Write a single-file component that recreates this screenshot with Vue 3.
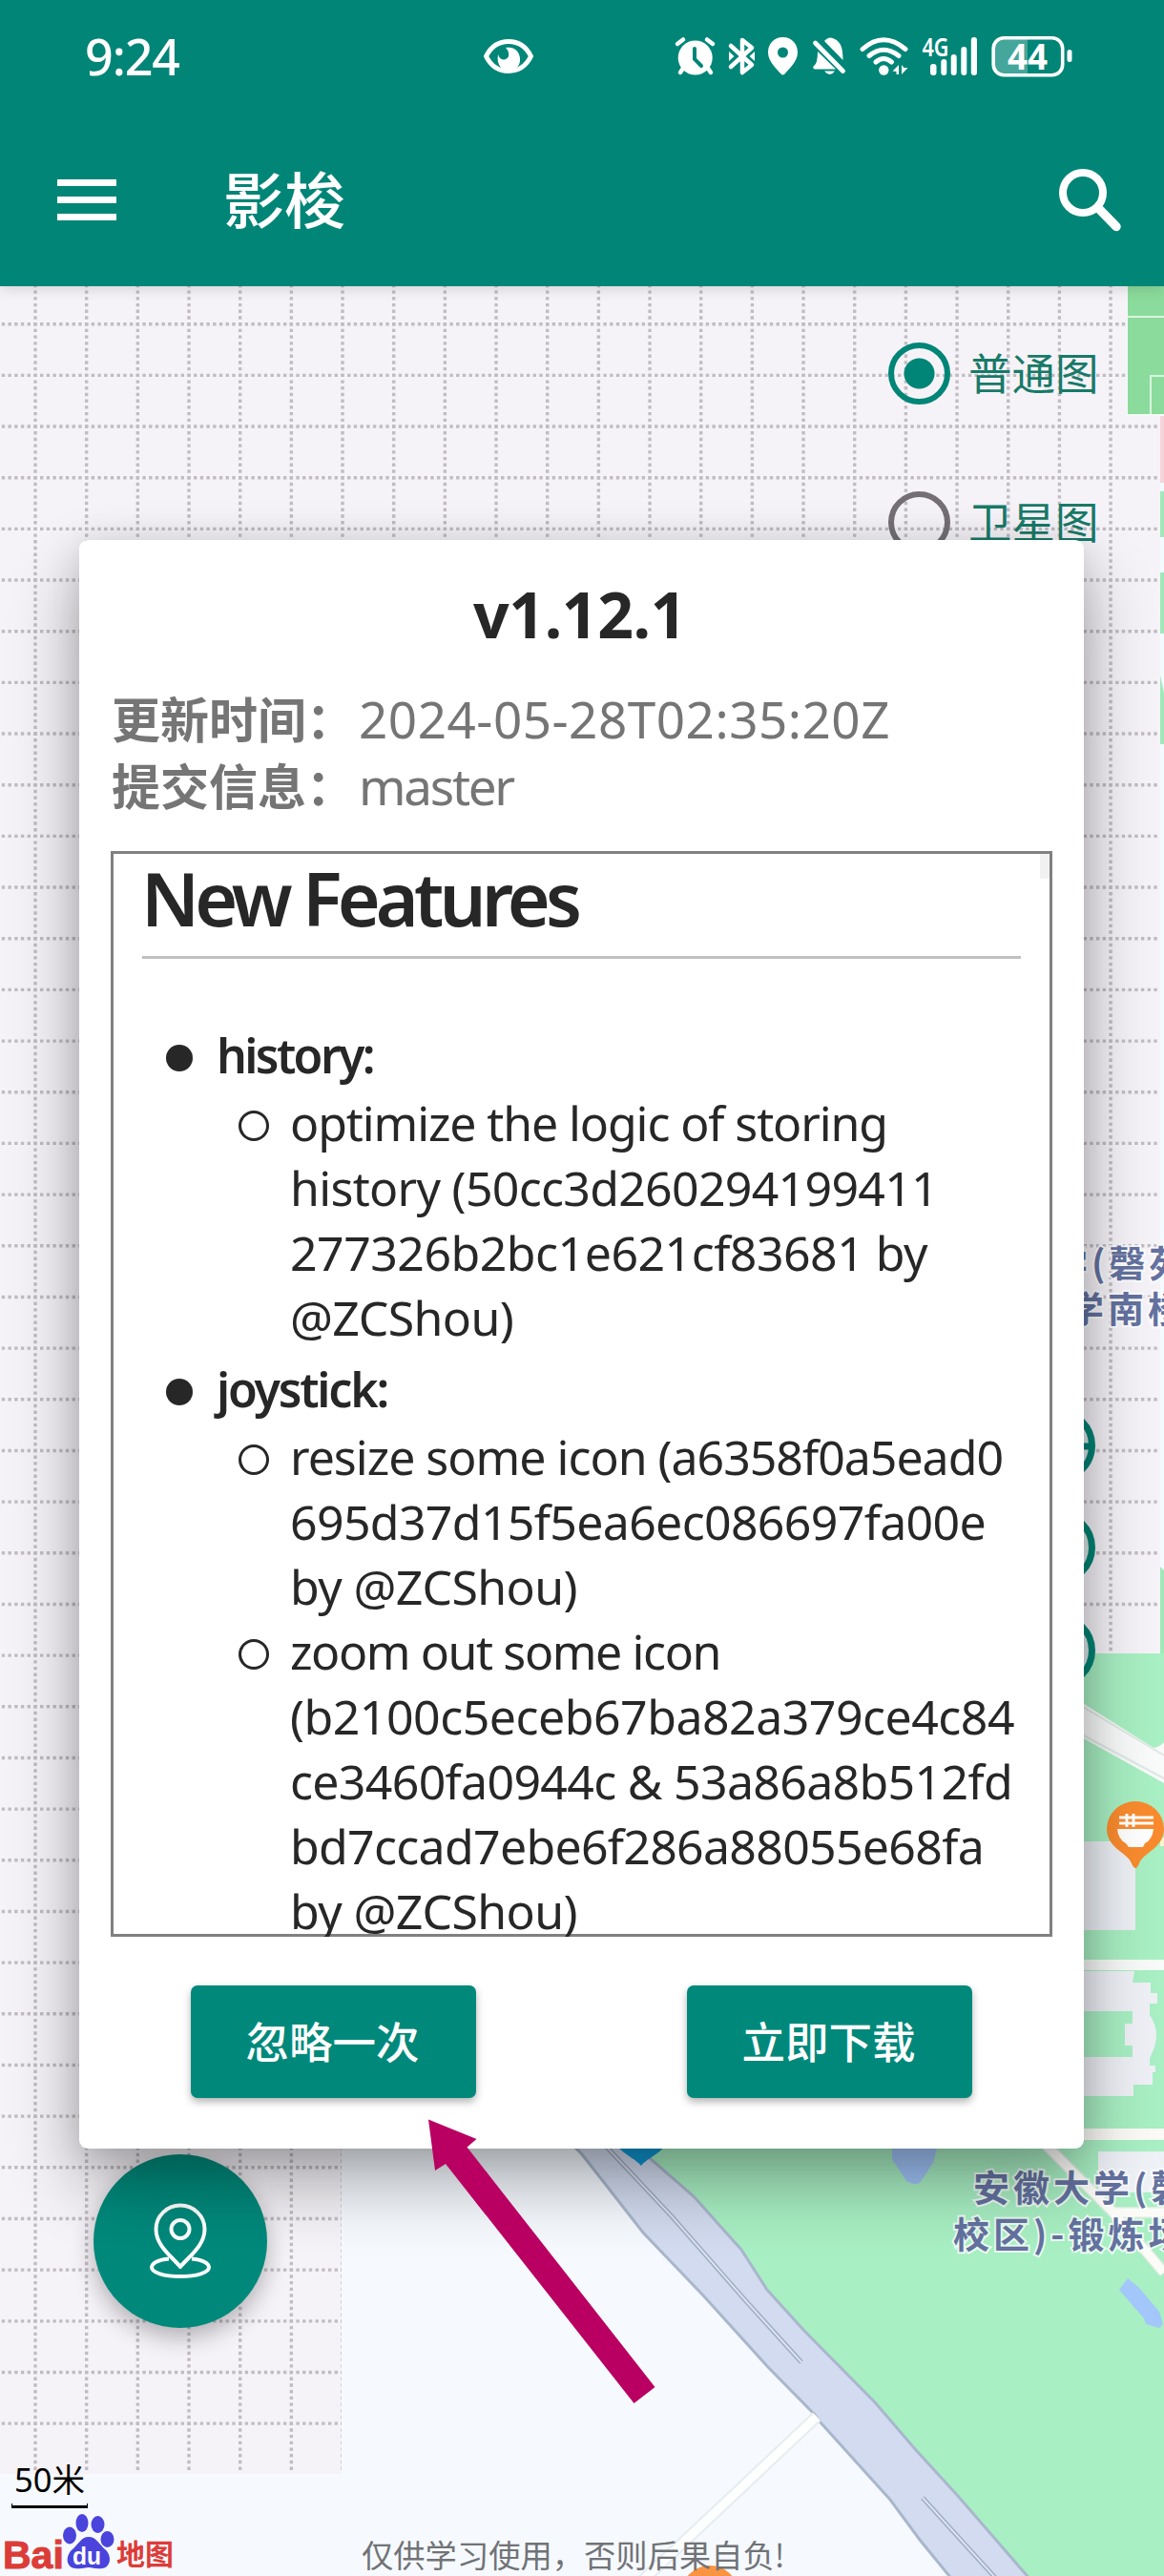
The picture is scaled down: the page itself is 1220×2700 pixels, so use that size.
<script setup>
const cell = 53.67
const columns = Array.from({ length: 22 }, (_, i) => 37 + i * cell)
const rows = Array.from({ length: 42 }, (_, i) => 339.7 + i * cell)

const groups = [
  {
    name: 'history:',
    width: 164,
    items: [
      [
        { text: 'optimize the logic of storing', width: 626 },
        { text: 'history (50cc3d260294199411', width: 679 },
        { text: '277326b2bc1e621cf83681 by', width: 668 },
        { text: '@ZCShou)', width: 234 },
      ],
    ],
  },
  {
    name: 'joystick:',
    width: 179,
    items: [
      [
        { text: 'resize some icon (a6358f0a5ead0', width: 747 },
        { text: '695d37d15f5ea6ec086697fa00e', width: 729 },
        { text: 'by @ZCShou)', width: 301 },
      ],
      [
        { text: 'zoom out some icon', width: 451 },
        { text: '(b2100c5eceb67ba82a379ce4c84', width: 759 },
        { text: 'ce3460fa0944c & 53a86a8b512fd', width: 757 },
        { text: 'bd7ccad7ebe6f286a88055e68fa', width: 727 },
        { text: 'by @ZCShou)', width: 301 },
      ],
    ],
  },
]

// Tracks a line of text out to the given width.
const vFit = {
  mounted(el, { value }) {
    const gap = (value - el.getBoundingClientRect().width) / el.textContent.length
    el.style.letterSpacing = gap.toFixed(3) + 'px'
  },
}
</script>

<template>
  <div class="screen">
    <svg class="map" width="1220" height="2700" viewBox="0 0 1220 2700">
      <rect width="1220" height="2700" fill="#f6f3f8" />
      <g stroke="#c0bcc1" stroke-width="3.4" stroke-dasharray="3.4 3.309" stroke-dashoffset="1.7">
        <line v-for="x in columns" :key="'c' + x" :x1="x" :x2="x" y1="286.03" y2="2591" />
        <line v-for="y in rows" :key="'r' + y" x1="-16.67" x2="1214" :y1="y" :y2="y" />
      </g>

      <rect x="358" y="2200" width="862" height="500" fill="#f6faff" />
      <rect x="0" y="2593" width="400" height="107" fill="#f6faff" />

      <rect x="1181" y="290" width="39" height="146" fill="#f3faf5" />
      <rect x="1182" y="290" width="38" height="144" fill="#8bdb9c" />
      <path d="M1182 332H1220M1206 434V394H1220" fill="none" stroke="#d9f5df" stroke-width="2" />

      <rect x="1216" y="434" width="4" height="1300" fill="#f3fbff" />
      <rect x="1216" y="436" width="4" height="70" fill="#f5d5d9" />
      <rect x="1216" y="515" width="4" height="48" fill="#9fe9b9" />
      <rect x="1216" y="600" width="4" height="64" fill="#9fe9b9" />
      <path d="M1216 708l4 18v54h-4z" fill="#9fe9b9" />
      <path d="M1216 1642l4 4v90h-4z" fill="#9fe9b9" />

      <rect x="1100" y="1733" width="120" height="560" fill="#a8efc3" />
      <path d="M650 2230L682 2263L727 2302L777 2358L804 2400L843 2443L917 2518L960 2568L1003 2615L1077 2700H1220V2230Z" fill="#a8efc3" />

      <path d="M1130 1782L1209 1832Q1216 1831 1220 1826V1869L1130 1819Z" fill="#f9fbfa" />
      <path d="M1130 1786L1220 1840M1130 1816L1220 1864" stroke="#dfe8e4" stroke-width="2" />
      <rect x="1130" y="1930" width="60" height="93" fill="#eceff4" />
      <rect x="1216" y="1926" width="4" height="9" fill="#fdf3cf" />
      <rect x="1130" y="2054" width="90" height="11" fill="#f8faf8" />
      <path d="M1130 2066H1189L1187 2078H1206V2089H1213V2100H1205V2112Q1219 2132 1205 2157V2165H1211V2172H1208V2185H1188V2197H1130V2156H1187V2144H1179V2121H1187V2108H1130Z" fill="#eef0f6" />
      <rect x="1130" y="2231" width="90" height="12" fill="#fbfaf6" />
      <rect x="1151" y="2255" width="69" height="43" fill="#eef1f6" />
      <path d="M1088 2240L1166 2318L1220 2382M1166 2319H1220" fill="none" stroke="#dfeae0" stroke-width="12" />
      <path d="M1088 2240L1166 2318L1220 2382M1166 2319H1220" fill="none" stroke="#fbfbf8" stroke-width="9" />

      <path d="M935 2240V2263L950 2286Q957 2291 964 2288L978 2267L985 2240Z" fill="#a3c6fb" />
      <path d="M1182 2388L1173 2400L1199 2430L1201 2436L1215 2440L1219 2436L1215 2423L1194 2398Z" fill="#a3c6fb" />

      <path d="M598 2246L610 2258L674 2340L738 2407L804 2480L853 2530L859 2538L933 2620L964 2662L999 2705H1081L1003 2615L960 2568L917 2518L843 2443L804 2400L777 2358L727 2302L682 2263L660 2240Z" fill="#d2dbef" stroke="#a9b7cc" stroke-width="3" />
      <path d="M628 2242L704 2323L782 2412L840 2476M967 2618L1046 2705" fill="none" stroke="#a5b2c8" stroke-width="5" />
      <path d="M628 2242L704 2323L782 2412L840 2476M967 2618L1046 2705" fill="none" stroke="#e6ecf8" stroke-width="1.5" />
      <path d="M856 2533L768 2616L672 2706" stroke="#e6ecf0" stroke-width="13" fill="none" />
      <path d="M856 2533L768 2616L672 2706" stroke="#fdfefe" stroke-width="9" fill="none" />

      <path d="M642 2232a30 30 0 0 1 60 0C702 2256 682 2258 672 2270C662 2258 642 2256 642 2232Z" fill="#0f97d3" />
      <circle cx="744" cy="2719" r="30" fill="#fb9440" />

      <path d="M1160 1917a30 29 0 0 1 60 0C1220 1937 1198 1942 1194 1953Q1190 1963 1186 1953C1182 1942 1160 1937 1160 1917Z" fill="#f98b2e" />
      <path d="M1171 1917H1209Q1208 1928 1200 1932L1198 1936H1183L1180 1932Q1172 1928 1171 1917Z" fill="#fff" />
      <path d="M1173 1905H1209M1173 1911H1209M1181 1901V1915M1188 1901V1915" stroke="#fff" stroke-width="3" />

      <g class="place">
        <text x="1102" y="1338">学(磬苑</text>
        <text x="1119" y="1386">学南楼</text>
        <text x="1020" y="2307">安徽大学(磬苑</text>
        <text x="999" y="2356">校区)-锻炼场</text>
      </g>

      <g fill="#dbe9e8" stroke="#008577" stroke-width="7">
        <circle cx="1109" cy="1515" r="35.5" />
        <circle cx="1109" cy="1622" r="35.5" />
        <circle cx="1109" cy="1730" r="35.5" />
        <path d="M1109 1516H1146" />
      </g>
    </svg>

    <header class="top">
      <div class="status">
        <span v-fit="99" class="clock">9:24</span>
        <svg class="status-icons" width="640" height="60" viewBox="490 30 640 60" fill="#fff" stroke="none">
          <path d="M509.500 59C515 48 524 43.500 533 43.500S551 48 556.500 59C551 70 542 74.500 533 74.500S515 70 509.500 59Z" fill="none" stroke="#fff" stroke-width="5" stroke-linejoin="round" />
          <path d="M530 50C541 48 546 57 545 64C544 71 539 74 533 74C526 74 520 68 522 57C524 64 531 64 533 59C534 55 532 52 530 50Z" />

          <circle cx="728.700" cy="60.500" r="18" />
          <path d="M710 46L716 41.500M747 46L741 41.500M717 70L713 76M741 70L745 76" stroke="#fff" stroke-width="4.500" stroke-linecap="round" />
          <path d="M728 51V62L735 69" fill="none" stroke="#008577" stroke-width="4" stroke-linecap="round" />

          <path d="M766 48L788 68L778 76V42L788 50L766 70" fill="none" stroke="#fff" stroke-width="4.500" stroke-linejoin="round" stroke-linecap="round" />
          <path d="M764 54L769.500 59L764 64ZM791 54L785.500 59L791 64Z" />

          <path d="M820.500 39C830 39 836 46 836 55C836 65 826 73 822.500 77.500Q820.500 79.500 818.500 77.500C815 73 805 65 805 55C805 46 811 39 820.500 39ZM820.500 49.500a5.500 5.500 0 1 0 0 11a5.500 5.500 0 1 0 0-11Z" fill-rule="evenodd" />

          <path d="M864 43Q869 37 875 41C881 44 883.500 50 883.500 63Z" />
          <path d="M857 54L876 72.500H854Q850.500 71 853.500 68.500Q857 66 857 54ZM864 74.500H875Q870 81.500 864 74.500Z" />
          <path d="M854.500 45L883.500 74.500" stroke="#fff" stroke-width="4.800" stroke-linecap="round" />

          <g fill="none" stroke="#fff" stroke-width="5" stroke-linecap="round">
            <path d="M904 51.500Q926 32 949 51.500M911 58.500Q926 46 942 58.500M918 65Q926 58 934.500 65" />
          </g>
          <circle cx="926.300" cy="73.500" r="5.200" />
          <path d="M942 68V78H939.500V75L935.500 74.500ZM945 78V68L947.500 71L951.500 71Z" />

          <g class="net"><text x="966.500" y="59" textLength="28" lengthAdjust="spacingAndGlyphs">4G</text></g>
          <rect x="975" y="67" width="6.500" height="12" rx="3" />
          <rect x="986.300" y="62" width="6" height="17" rx="3" />
          <rect x="996.700" y="57" width="6" height="22" rx="3" />
          <rect x="1007.300" y="49" width="6" height="30" rx="3" />
          <rect x="1017.800" y="39" width="6.200" height="40" rx="3" />

          <path d="M1077 40H1052Q1041 40 1041 51V67Q1041 78 1052 78H1077Z" opacity=".27" />
          <rect x="1041.200" y="39.700" width="72.500" height="39" rx="11" fill="none" stroke="#fff" stroke-width="3.600" />
          <rect x="1118.500" y="52" width="5" height="13" rx="2.500" />
          <text class="level" x="1056" y="73" textLength="42" lengthAdjust="spacingAndGlyphs">44</text>
        </svg>
      </div>
      <div class="bar">
        <div class="menu"><i></i><i></i><i></i></div>
        <h1>影梭</h1>
        <svg class="search" width="66" height="68" viewBox="0 0 66 68" fill="none" stroke="#fff" stroke-width="8">
          <circle cx="25" cy="25" r="21" />
          <path d="M41 41L60 60.500" stroke-width="9.500" stroke-linecap="round" />
        </svg>
      </div>
    </header>

    <div class="layers">
      <label><span class="radio on"></span><span class="name">普通图</span></label>
      <label><span class="radio"></span><span class="name">卫星图</span></label>
    </div>

    <div class="fab">
      <svg width="70" height="84" viewBox="154 2307 70 84" fill="none" stroke="#fff" stroke-width="4">
        <path d="M189 2376C180 2365 163.500 2354 163.500 2336.500a25.500 25 0 0 1 51 0C214.500 2354 198 2365 189 2376Z" stroke-linejoin="round" />
        <circle cx="189" cy="2336.500" r="9.500" />
        <path d="M177 2367.500C166 2368.500 159 2372 159 2376.500C159 2382 172 2386 189 2386S219 2382 219 2376.500C219 2372 212 2368.500 201 2367.500" />
      </svg>
    </div>

    <div class="scale">50米</div>
    <div class="brand">
      <b class="bai">Bai</b>
      <svg width="54" height="60" viewBox="66 2634 54 60" fill="#4a44dc">
        <ellipse cx="73" cy="2657.500" rx="7" ry="9" />
        <ellipse cx="86" cy="2644.500" rx="6.500" ry="9.500" />
        <ellipse cx="102.500" cy="2646" rx="7" ry="9" />
        <ellipse cx="112.500" cy="2661.500" rx="7" ry="8.500" />
        <path d="M93 2659C101 2659 104 2667 110 2672C118 2679 116 2691 107 2692C100 2693 98 2691 93 2691S86 2693 79 2692C69 2691 68 2679 76 2672C82 2667 85 2659 93 2659Z" />
        <text x="76" y="2688" class="du" textLength="30" lengthAdjust="spacingAndGlyphs">du</text>
      </svg>
      <b class="ditu">地图</b>
    </div>
    <p class="notice">仅供学习使用，否则后果自负!</p>

    <section class="dialog">
      <h2><span v-fit="223">v1.12.1</span></h2>
      <div class="meta"><b>更新时间：</b><span v-fit="557">2024-05-28T02:35:20Z</span></div>
      <div class="meta"><b>提交信息：</b><span v-fit="162">master</span></div>
      <div class="notes">
        <h3><span v-fit="457">New Features</span></h3>
        <div v-for="group in groups" :key="group.name" class="group">
          <div class="head"><i class="disc"></i><b v-fit="group.width">{{ group.name }}</b></div>
          <div v-for="(item, i) in group.items" :key="i" class="item">
            <i class="ring"></i>
            <div>
              <div v-for="line in item" :key="line.text" class="line"><span v-fit="line.width">{{ line.text }}</span></div>
            </div>
          </div>
        </div>
        <i class="thumb"></i>
      </div>
      <div class="actions">
        <button>忽略一次</button>
        <button>立即下载</button>
      </div>
    </section>

    <svg class="arrow" width="246" height="306" viewBox="445 2218 246 306">
      <path d="M449 2221.500L499.500 2242L489.500 2250.500L686.500 2502L664.500 2519L467 2268L456 2275Z" fill="#b90062" />
    </svg>
  </div>
</template>

<style>
body {
  margin: 0;
}
</style>

<style scoped>
.screen {
  position: relative;
  width: 1220px;
  height: 2700px;
  overflow: hidden;
  background: #f6faff;
  font-family: "Noto Sans", "Noto Sans CJK SC", sans-serif;
}
.map {
  position: absolute;
  top: 0;
  left: 0;
}
.place text {
  font: 700 38px "Noto Sans CJK SC", sans-serif;
  letter-spacing: 4px;
  fill: #6472a0;
  stroke: #fff;
  stroke-opacity: 0.8;
  stroke-width: 4px;
  paint-order: stroke;
}
.top {
  position: relative;
  height: 300px;
  background: #008577;
  box-shadow: 0 2px 14px rgba(0, 0, 0, 0.15);
  color: #fff;
}
.status {
  display: flex;
  height: 120px;
}
.clock {
  align-self: flex-start;
  margin: 23px 0 0 89px;
  font-size: 52px;
  font-weight: 500;
  line-height: 71px;
  white-space: nowrap;
}
.status-icons {
  margin: 30px 0 0 auto;
  margin-right: 90px;
}
.net text {
  font: 600 27px "Noto Sans", sans-serif;
}
.level {
  font: 700 37px "Noto Sans", sans-serif;
}
.bar {
  display: flex;
  align-items: center;
  height: 178px;
  padding: 0 44px 0 60px;
}
.menu {
  display: flex;
  flex-direction: column;
  gap: 11px;
  width: 62px;
}
.menu i {
  height: 7px;
  background: #fff;
}
h1 {
  margin: 0 auto 0 112px;
  padding-bottom: 6px;
  font: 500 64px/90px "Noto Sans CJK SC", sans-serif;
}
.search {
  margin-top: 4px;
}
.layers {
  position: absolute;
  top: 352px;
  left: 931px;
  display: flex;
  flex-direction: column;
  gap: 78px;
}
.layers label {
  display: flex;
  align-items: center;
  gap: 19px;
  height: 78px;
}
.name {
  padding-bottom: 4px;
  color: #187a68;
  font: 400 45.5px/74px "Noto Sans CJK SC", sans-serif;
}
.radio {
  box-sizing: border-box;
  width: 65px;
  height: 65px;
  border: 6.5px solid #736f74;
  border-radius: 50%;
}
.radio.on {
  border-color: #008577;
  background: radial-gradient(circle, #008577 15.5px, transparent 16.5px);
}
.fab {
  position: absolute;
  top: 2258px;
  left: 98px;
  display: flex;
  align-items: center;
  justify-content: center;
  width: 182px;
  height: 182px;
  border-radius: 50%;
  background: #00897b;
  box-shadow: 0 10px 24px rgba(0, 0, 0, 0.28);
}
.scale {
  position: absolute;
  top: 2574px;
  left: 12px;
  box-sizing: border-box;
  width: 80px;
  height: 55px;
  border-bottom: 3px solid #000;
  font: 400 34.5px/50px "Noto Sans", "Noto Sans CJK SC", sans-serif;
  text-align: center;
}
.scale::before,
.scale::after {
  content: "";
  position: absolute;
  bottom: 0;
  left: 0;
  width: 1px;
  height: 2px;
  background: #000;
}
.scale::after {
  right: 0;
  left: auto;
}
.brand {
  position: absolute;
  top: 2634px;
  left: 3px;
  display: flex;
  align-items: flex-end;
  height: 60px;
  color: #dc3c38;
}
.bai {
  width: 63px;
  margin-bottom: -6px;
  font: 700 41px/44px "Liberation Sans", sans-serif;
  -webkit-text-stroke: 1px #dc3c38;
}
.brand .du {
  fill: #fff;
  font: 700 25px "Liberation Sans", sans-serif;
}
.ditu {
  margin: 0 0 3px 2px;
  font: 700 30px/32px "Noto Sans CJK SC", sans-serif;
}
.notice {
  position: absolute;
  top: 2654px;
  left: 379px;
  margin: 0;
  color: #717377;
  font: 400 33.3px/46px "Noto Sans CJK SC", sans-serif;
  white-space: nowrap;
}
.dialog {
  position: absolute;
  top: 566px;
  left: 83px;
  box-sizing: border-box;
  width: 1053px;
  height: 1686px;
  padding: 32px 33px 0;
  border-radius: 9px;
  background: #fff;
  box-shadow: 0 36px 72px rgba(0, 0, 0, 0.32), 0 4px 36px rgba(0, 0, 0, 0.12);
}
.dialog span,
.dialog b {
  display: inline-block;
  white-space: nowrap;
}
h2 {
  margin: 0 4px 30px 0;
  color: #272727;
  font-size: 66px;
  font-weight: 700;
  line-height: 90px;
  text-align: center;
}
.meta {
  display: flex;
  height: 70px;
  padding-left: 1px;
  color: #757575;
  font-size: 53px;
  line-height: 72px;
}
.meta b {
  width: 259px;
  font: 700 51px/68px "Noto Sans CJK SC", sans-serif;
}
.notes {
  position: relative;
  box-sizing: border-box;
  height: 1138px;
  margin-top: 34px;
  padding: 0 30px;
  border: 3px solid #808080;
  clip-path: inset(0);
  color: #272727;
  font-size: 50px;
}
h3 {
  margin: 0 0 67px;
  padding-bottom: 14px;
  border-bottom: 3px solid #c0c0c0;
  font-size: 77px;
  font-weight: 600;
  line-height: 93px;
}
h3 span {
  margin-left: -1px;
}
.group + .group {
  margin-top: 7px;
}
.head {
  display: flex;
  height: 71px;
  line-height: 69px;
}
.head b {
  font-weight: 600;
}
.disc {
  width: 28px;
  height: 28px;
  margin: 23px 25px 0 25px;
  border-radius: 50%;
  background: #272727;
}
.item {
  display: flex;
}
.ring {
  box-sizing: border-box;
  width: 32px;
  height: 32px;
  margin: 21px 22px 0 101px;
  border: 3px solid #272727;
  border-radius: 50%;
}
.line {
  height: 68px;
  line-height: 69px;
}
.thumb {
  position: absolute;
  top: 0;
  right: 0;
  width: 10px;
  height: 26px;
  background: #f1f1f1;
}
.actions {
  display: flex;
  justify-content: space-between;
  padding: 51px 84px 0;
}
button {
  width: 299px;
  height: 118px;
  padding: 0 2px 4px 0;
  border: 0;
  border-radius: 7px;
  background: #00897b;
  box-shadow: 0 4px 8px rgba(0, 0, 0, 0.3);
  color: #fff;
  font: 500 45.5px/112px "Noto Sans CJK SC", sans-serif;
}
.arrow {
  position: absolute;
  top: 2218px;
  left: 445px;
}
</style>
